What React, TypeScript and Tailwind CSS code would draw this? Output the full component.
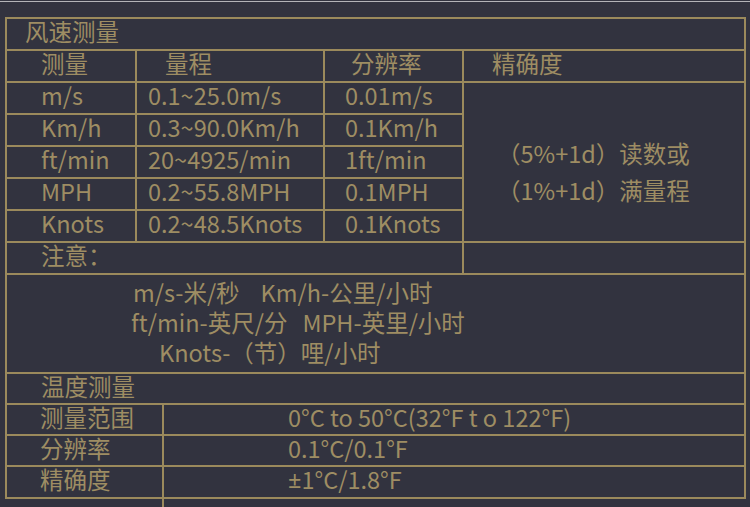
import React from 'react';

const windRows = [
  { unit: 'm/s', range: '0.1~25.0m/s', res: '0.01m/s' },
  { unit: 'Km/h', range: '0.3~90.0Km/h', res: '0.1Km/h' },
  { unit: 'ft/min', range: '20~4925/min', res: '1ft/min' },
  { unit: 'MPH', range: '0.2~55.8MPH', res: '0.1MPH' },
  { unit: 'Knots', range: '0.2~48.5Knots', res: '0.1Knots' },
];

const tempRows = [
  { label: '测量范围', value: '0°C to 50°C(32°F t o 122°F)', h: 'h-[31px]' },
  { label: '分辨率', value: '0.1°C/0.1°F', h: 'h-[31px]' },
  { label: '精确度', value: '±1°C/1.8°F', h: 'h-[30px]' },
];

export default function App() {
  return (
    <div
      className="w-[750px] h-[507px] overflow-hidden bg-[#32333f] text-[#9e8d63] text-[23.5px]"
      style={{ fontFamily: '"Noto Sans CJK SC", "Noto Sans", sans-serif' }}
    >
      <div className="h-px" />
      <div className="h-px bg-[#b4b4b8]" />
      <div className="h-[15px]" />

      {/* spec table */}
      <div className="ml-[5px] w-[741px] border-2 border-[#9b8a5c]">
        {/* wind title */}
        <div className="h-[32px] flex items-center pb-[4px] pl-[18px] border-b-2 border-[#9b8a5c]">风速测量</div>

        <div className="flex border-b-2 border-[#9b8a5c]">
          {/* left: columns 1-3 */}
          <div className="w-[457px] border-r-2 border-[#9b8a5c]">
            <div className="h-[32px] flex border-b-2 border-[#9b8a5c]">
              <div className="w-[130px] flex items-center pb-[4px] pl-[34px] border-r-2 border-[#9b8a5c]">测量</div>
              <div className="w-[188px] flex items-center pb-[4px] pl-[28px] border-r-2 border-[#9b8a5c]">量程</div>
              <div className="flex-1 flex items-center pb-[4px] pl-[26px]">分辨率</div>
            </div>
            {windRows.map((r) => (
              <div key={r.unit} className="h-[32px] flex border-b-2 border-[#9b8a5c]">
                <div className="w-[130px] flex items-center pb-[4px] pl-[34px] border-r-2 border-[#9b8a5c]">{r.unit}</div>
                <div className="w-[188px] flex items-center pb-[4px] pl-[11px] border-r-2 border-[#9b8a5c]">{r.range}</div>
                <div className="flex-1 flex items-center pb-[4px] pl-[20px]">{r.res}</div>
              </div>
            ))}
            <div className="h-[30px] flex items-center pb-[4px] pl-[34px]">注意：</div>
          </div>

          {/* right: accuracy */}
          <div className="flex-1">
            <div className="h-[32px] flex items-center pb-[4px] pl-[28px] border-b-2 border-[#9b8a5c]">精确度</div>
            <div className="h-[160px] pl-[33px] pt-[52px] leading-[37px] border-b-2 border-[#9b8a5c]">
              <div>（5%+1d）读数或</div>
              <div>（1%+1d）满量程</div>
            </div>
          </div>
        </div>

        {/* notes */}
        <div className="h-[99px] pt-[2px] border-b-2 border-[#9b8a5c]">
          <div className="h-[30px] leading-[30px] pl-[126px] flex">
            <span>m/s-米/秒</span>
            <span className="ml-[21px]">Km/h-公里/小时</span>
          </div>
          <div className="h-[30px] leading-[30px] pl-[124px] flex">
            <span>ft/min-英尺/分</span>
            <span className="ml-[15px]">MPH-英里/小时</span>
          </div>
          <div className="h-[30px] leading-[30px] pl-[152px] flex">
            <span>Knots-（节）哩/小时</span>
          </div>
        </div>

        {/* temperature */}
        <div className="h-[31px] flex items-center pb-[4px] pl-[34px] border-b-2 border-[#9b8a5c]">温度测量</div>
        {tempRows.map((r, i) => (
          <div
            key={r.label}
            className={`${r.h} flex ${i < tempRows.length - 1 ? 'border-b-2 border-[#9b8a5c]' : ''}`}
          >
            <div className="w-[157px] flex items-center pb-[4px] pl-[33px] border-r-2 border-[#9b8a5c]">{r.label}</div>
            <div className="flex-1 flex items-center pb-[4px] pl-[124px]">
              {r.value.startsWith('±') ? (
                <>
                  <span className="font-['Noto_Sans']">±</span>
                  {r.value.slice(1)}
                </>
              ) : (
                r.value
              )}
            </div>
          </div>
        ))}
      </div>

      {/* next row, cut off */}
      <div className="ml-[162px] h-[20px] border-l-2 border-[#9b8a5c]" />
    </div>
  );
}
